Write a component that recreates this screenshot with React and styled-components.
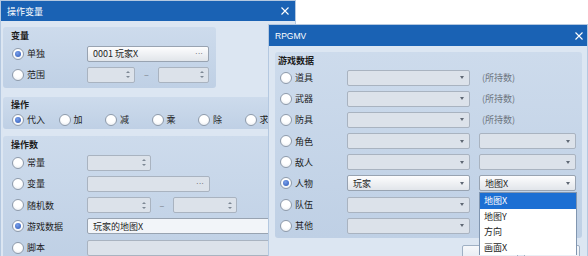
import React from 'react';
import styled, { createGlobalStyle } from 'styled-components';

const GlobalStyle = createGlobalStyle`
  html, body {
    margin: 0;
    padding: 0;
    background: #fff;
  }
  body {
    font-family: "Noto Sans CJK SC", "Liberation Sans", sans-serif;
    font-size: 9px;
    color: #1d1d1d;
  }
`;

const Desktop = styled.div`
  position: relative;
  width: 588px;
  height: 256px;
  overflow: hidden;
  background: #fff;
`;

// windows sit on a free canvas, so they are placed by coordinates
const Window = styled.div`
  position: absolute;
  left: ${p => p.$x}px;
  top: ${p => p.$y}px;
  width: ${p => p.$w}px;
  height: ${p => p.$h}px;
  box-sizing: border-box;
  display: flex;
  flex-direction: column;
  overflow: hidden;
  background: #dce6f2;
  border: 1px solid #b4c8e0;
`;

const TitleBar = styled.div`
  flex: 0 0 ${p => p.$h}px;
  display: flex;
  align-items: center;
  justify-content: space-between;
  padding: 0 ${p => p.$pr}px 0 6px;
  background: #1a62b4;
  color: #fff;
`;

const TitleText = styled.span`
  font-family: ${p =>
    p.$latin ? '"Liberation Sans", sans-serif' : '"Noto Sans CJK SC", sans-serif'};
  font-size: ${p => (p.$latin ? 8.5 : 9)}px;
`;

const Body = styled.div`
  flex: 1 1 auto;
  display: flex;
  flex-direction: column;
  padding: ${p => p.$pt}px 0 0 ${p => p.$pl}px;
`;

const Group = styled.div`
  flex: 0 0 auto;
  width: ${p => p.$w}px;
  margin-top: ${p => p.$mt || 0}px;
  padding: ${p => p.$pt}px 0 ${p => p.$pb}px ${p => p.$pl}px;
  box-sizing: border-box;
  border-radius: 3px;
  background: linear-gradient(to bottom, #cddbec, #bfd0e5);
`;

const GroupTitle = styled.div`
  font-weight: bold;
  line-height: 14px;
  margin-bottom: ${p => p.$mb}px;
`;

const Rows = styled.div`
  display: flex;
  flex-direction: column;
  gap: ${p => p.$gap}px;
  padding-left: ${p => p.$indent}px;
`;

const Row = styled.div`
  display: flex;
  align-items: center;
  height: ${p => p.$h || 17}px;
`;

const Choice = styled.div`
  flex: 0 0 auto;
  width: ${p => p.$w}px;
  display: flex;
  align-items: center;
  gap: 3px;
  white-space: nowrap;
`;

const Radio = styled.span`
  flex: 0 0 auto;
  width: 12px;
  height: 12px;
  box-sizing: border-box;
  border-radius: 50%;
  border: 1px solid #8f9bab;
  background: radial-gradient(circle at 50% 35%, #ffffff 45%, #e3e8ee 100%);
  display: flex;
  align-items: center;
  justify-content: center;

  &::after {
    content: '';
    display: ${p => (p.$on ? 'block' : 'none')};
    width: 6px;
    height: 6px;
    border-radius: 50%;
    background: radial-gradient(circle at 40% 35%, #7aa0ea, #2d58b6);
  }
`;

const fieldFills = {
  off: '#dce2ea',
  combo: 'linear-gradient(to bottom, #fdfdfe, #e1e5ea)',
  edit: '#f2f5f9'
};

const Field = styled.div`
  flex: 0 0 auto;
  box-sizing: border-box;
  width: ${p => p.$w}px;
  height: 16px;
  margin-left: ${p => p.$ml || 0}px;
  display: flex;
  align-items: center;
  justify-content: space-between;
  padding: 0 5px 0 5px;
  border: 1px solid ${p => (p.$kind === 'off' ? '#a9b3c0' : '#98a3b1')};
  border-radius: 2px;
  background: ${p => fieldFills[p.$kind]};
  white-space: nowrap;
`;

const Arrow = styled.span`
  width: 0;
  height: 0;
  border-left: 2.5px solid transparent;
  border-right: 2.5px solid transparent;
  border-top: 3px solid #5f6874;
`;

const SpinArrows = styled.span`
  display: flex;
  flex-direction: column;
  gap: 3px;
  margin-right: -1px;

  &::before,
  &::after {
    content: '';
    border-left: 2px solid transparent;
    border-right: 2px solid transparent;
  }
  &::before {
    border-bottom: 2px solid #7d8794;
  }
  &::after {
    border-top: 2px solid #7d8794;
  }
`;

const Dots = styled.span`
  font-family: "Liberation Sans", sans-serif;
  color: #555;
  font-size: 8px;
  letter-spacing: 0;
`;

const Dash = styled.span`
  flex: 0 0 ${p => p.$w}px;
  text-align: center;
  color: #7a828c;
`;

const Note = styled.span`
  margin-left: 12px;
  color: #6d7580;
`;

const OpItem = styled(Choice)`
  width: 46.5px;
`;

const Buttons = styled.div`
  display: flex;
  justify-content: flex-end;
  gap: 6px;
  margin-top: 7px;
  padding-right: 7px;
`;

const Button = styled.div`
  width: 56px;
  height: 20px;
  box-sizing: border-box;
  border: 1px solid #9fb0c4;
  border-radius: 2px;
  background: linear-gradient(to bottom, #f6f8fb, #dfe6ef);
`;

const Dropdown = styled.ul`
  position: absolute;
  left: 210px;
  top: 167px;
  width: 98px;
  margin: 0;
  padding: 0;
  list-style: none;
  box-sizing: border-box;
  border: 1px solid #8196b0;
  border-bottom: none;
  background: #fff;
`;

const Option = styled.li`
  height: 15.5px;
  line-height: 15.5px;
  padding-left: 4px;
  background: ${p => (p.$active ? '#1c6fd3' : 'transparent')};
  color: ${p => (p.$active ? '#fff' : '#1d1d1d')};
`;

const Close = () => (
  <svg width="8" height="8" viewBox="0 0 8 8">
    <path d="M0.5 0.5 L7.5 7.5 M7.5 0.5 L0.5 7.5" stroke="#fff" strokeWidth="1.1" />
  </svg>
);

const Spin = ({ w, ml }) => (
  <Field $kind="off" $w={w} $ml={ml}>
    <span />
    <SpinArrows />
  </Field>
);

const operations = ['代入', '加', '减', '乘', '除', '求余'];

const dataRows = [
  { label: '道具', note: '(所持数)' },
  { label: '武器', note: '(所持数)' },
  { label: '防具', note: '(所持数)' },
  { label: '角色', second: '' },
  { label: '敌人', second: '' },
  { label: '人物', value: '玩家', second: '地图X', on: true },
  { label: '队伍', second: '' },
  { label: '其他', second: '' }
];

const mapOptions = ['地图X', '地图Y', '方向', '画面X'];

const VariableWindow = () => (
  <Window $x={0} $y={0} $w={296} $h={262}>
    <TitleBar $h={20} $pr={6}>
      <TitleText>操作变量</TitleText>
      <Close />
    </TitleBar>
    <Body $pt={6} $pl={2}>
      <Group $w={213} $pt={2} $pb={5} $pl={8}>
        <GroupTitle $mb={2}>变量</GroupTitle>
        <Rows $gap={4} $indent={1}>
          <Row>
            <Choice $w={75}><Radio $on />单独</Choice>
            <Field $kind="combo" $w={122}>
              <span>0001 玩家X</span>
              <Dots>···</Dots>
            </Field>
          </Row>
          <Row>
            <Choice $w={75}><Radio />范围</Choice>
            <Spin w={48} />
            <Dash $w={23}>–</Dash>
            <Spin w={51} />
          </Row>
        </Rows>
      </Group>

      <Group $w={292} $mt={9} $pt={1} $pb={2} $pl={8}>
        <GroupTitle $mb={0}>操作</GroupTitle>
        <Rows $gap={0} $indent={1}>
          <Row $h={15}>
            {operations.map((op, i) => (
              <OpItem key={op}><Radio $on={i === 0} />{op}</OpItem>
            ))}
          </Row>
        </Rows>
      </Group>

      <Group $w={292} $mt={7} $pt={2} $pb={4} $pl={8}>
        <GroupTitle $mb={2}>操作数</GroupTitle>
        <Rows $gap={4.3} $indent={1}>
          <Row>
            <Choice $w={75}><Radio />常量</Choice>
            <Spin w={64} />
          </Row>
          <Row>
            <Choice $w={75}><Radio />变量</Choice>
            <Field $kind="off" $w={123}>
              <span />
              <Dots>···</Dots>
            </Field>
          </Row>
          <Row>
            <Choice $w={75}><Radio />随机数</Choice>
            <Spin w={64} />
            <Dash $w={22}>–</Dash>
            <Spin w={64} />
          </Row>
          <Row>
            <Choice $w={75}><Radio $on />游戏数据</Choice>
            <Field $kind="edit" $w={200}>
              <span>玩家的地图X</span>
            </Field>
          </Row>
          <Row>
            <Choice $w={75}><Radio />脚本</Choice>
            <Field $kind="off" $w={200} />
          </Row>
        </Rows>
      </Group>
    </Body>
  </Window>
);

const GameDataWindow = () => (
  <Window $x={268} $y={24} $w={320} $h={240}>
    <TitleBar $h={21} $pr={4}>
      <TitleText $latin>RPGMV</TitleText>
      <Close />
    </TitleBar>
    <Body $pt={6} $pl={6}>
      <Group $w={307} $pt={2} $pb={4} $pl={3}>
        <GroupTitle $mb={1}>游戏数据</GroupTitle>
        <Rows $gap={4.2} $indent={2}>
          {dataRows.map(row => (
            <Row key={row.label}>
              <Choice $w={67}><Radio $on={row.on} />{row.label}</Choice>
              <Field $kind={row.on ? 'combo' : 'off'} $w={123}>
                <span>{row.value}</span>
                <Arrow />
              </Field>
              {row.note ? (
                <Note>{row.note}</Note>
              ) : (
                <Field $kind={row.on ? 'combo' : 'off'} $w={97} $ml={9}>
                  <span>{row.second}</span>
                  <Arrow />
                </Field>
              )}
            </Row>
          ))}
        </Rows>
      </Group>
      <Buttons>
        <Button />
        <Button />
      </Buttons>
    </Body>
    <Dropdown>
      {mapOptions.map((opt, i) => (
        <Option key={opt} $active={i === 0}>{opt}</Option>
      ))}
    </Dropdown>
  </Window>
);

export default function App() {
  return (
    <>
      <GlobalStyle />
      <Desktop>
        <VariableWindow />
        <GameDataWindow />
      </Desktop>
    </>
  );
}
